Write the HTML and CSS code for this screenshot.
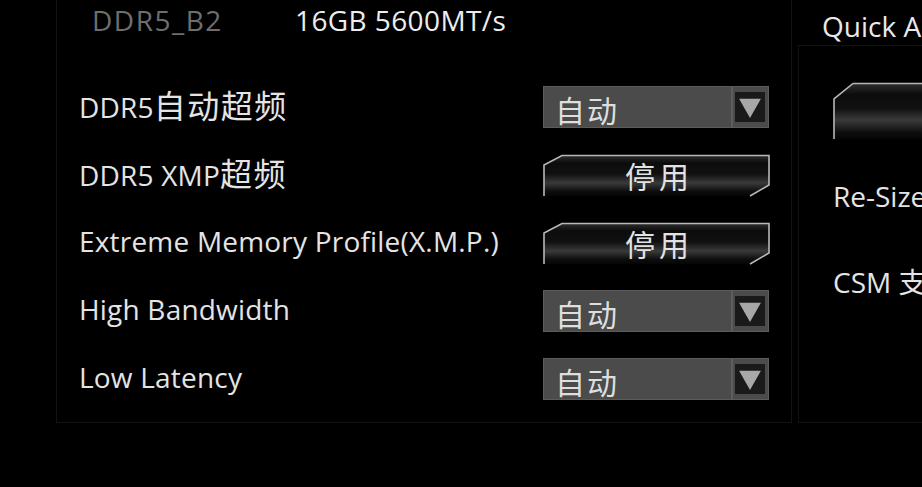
FILE: index.html
```html
<!DOCTYPE html>
<html lang="zh-CN">
<head>
<meta charset="utf-8">
<title>Memory Settings</title>
<link rel="stylesheet" href="styles.css">
</head>
<body>
<div class="screen">
  <section class="panel-left">
    <div class="header">
      <span class="slot">DDR5_B2</span>
      <span class="spec">16GB 5600MT/s</span>
    </div>
    <div class="rows">
      <div class="row">
        <span class="label">DDR5<span class="cjk">自动超频</span></span>
        <div class="select"><span class="select-text">自动</span><span class="arrow"><svg width="22" height="22" viewBox="0 0 22 22"><path d="M3 5 L19 5 L11 19 Z" fill="#a8a8a8"/></svg></span></div>
      </div>
      <div class="row">
        <span class="label">DDR5 XMP<span class="cjk">超频</span></span>
        <div class="btn">
          <svg class="btn-bg" width="228" height="43" viewBox="0 0 228 43" preserveAspectRatio="none">
            <defs>
              <linearGradient id="g1" x1="0" y1="0" x2="0" y2="1">
                <stop offset="0" stop-color="#2e2e2e"/>
                <stop offset="0.18" stop-color="#0c0c0c"/>
                <stop offset="0.45" stop-color="#101010"/>
                <stop offset="0.68" stop-color="#3a3a3a"/>
                <stop offset="0.88" stop-color="#0e0e0e"/>
                <stop offset="1" stop-color="#050505"/>
              </linearGradient>
            </defs>
            <path d="M1 42 L1 11 L19 1.5 L226 1.5 L226 31 L207 42 Z" fill="url(#g1)"/>
            <path d="M1 42 L1 11 L19 1.5 L226 1.5 L226 31 L207 42" fill="none" stroke="#b8b8b8" stroke-width="1.6"/>
          </svg>
          <span class="btn-text">停用</span>
        </div>
      </div>
      <div class="row">
        <span class="label">Extreme Memory Profile(X.M.P.)</span>
        <div class="btn">
          <svg class="btn-bg" width="228" height="43" viewBox="0 0 228 43" preserveAspectRatio="none">
            <defs>
              <linearGradient id="g2" x1="0" y1="0" x2="0" y2="1">
                <stop offset="0" stop-color="#2e2e2e"/>
                <stop offset="0.18" stop-color="#0c0c0c"/>
                <stop offset="0.45" stop-color="#101010"/>
                <stop offset="0.68" stop-color="#3a3a3a"/>
                <stop offset="0.88" stop-color="#0e0e0e"/>
                <stop offset="1" stop-color="#050505"/>
              </linearGradient>
            </defs>
            <path d="M1 42 L1 11 L19 1.5 L226 1.5 L226 31 L207 42 Z" fill="url(#g2)"/>
            <path d="M1 42 L1 11 L19 1.5 L226 1.5 L226 31 L207 42" fill="none" stroke="#b8b8b8" stroke-width="1.6"/>
          </svg>
          <span class="btn-text">停用</span>
        </div>
      </div>
      <div class="row">
        <span class="label">High Bandwidth</span>
        <div class="select"><span class="select-text">自动</span><span class="arrow"><svg width="22" height="22" viewBox="0 0 22 22"><path d="M3 5 L19 5 L11 19 Z" fill="#a8a8a8"/></svg></span></div>
      </div>
      <div class="row">
        <span class="label">Low Latency</span>
        <div class="select"><span class="select-text">自动</span><span class="arrow"><svg width="22" height="22" viewBox="0 0 22 22"><path d="M3 5 L19 5 L11 19 Z" fill="#a8a8a8"/></svg></span></div>
      </div>
    </div>
  </section>
  <section class="panel-right-col">
    <div class="right-title">Quick Access</div>
    <div class="panel-right">
      <div class="rbtn">
        <svg width="100" height="58" viewBox="0 0 100 58">
          <defs>
            <linearGradient id="g3" x1="0" y1="0" x2="0" y2="1">
              <stop offset="0" stop-color="#2e2e2e"/>
              <stop offset="0.2" stop-color="#0c0c0c"/>
              <stop offset="0.45" stop-color="#111"/>
              <stop offset="0.66" stop-color="#3a3a3a"/>
              <stop offset="0.88" stop-color="#0e0e0e"/>
              <stop offset="1" stop-color="#050505"/>
            </linearGradient>
          </defs>
          <path d="M1 57 L1 17 L20 1.5 L100 1.5 L100 57 Z" fill="url(#g3)"/>
          <path d="M1 57 L1 17 L20 1.5 L100 1.5" fill="none" stroke="#b8b8b8" stroke-width="1.6"/>
        </svg>
      </div>
      <div class="ritem">Re-Size BAR</div>
      <div class="ritem">CSM 支持</div>
    </div>
  </section>
</div>
</body>
</html>
```

FILE: styles.css
```css
html, body {
  margin: 0;
  padding: 0;
  background: #000;
  width: 922px;
  height: 487px;
  overflow: hidden;
}

.screen {
  display: flex;
  align-items: flex-start;
  width: 922px;
  overflow: hidden;
  font-family: "Open Sans", "Noto Sans CJK SC", sans-serif;
  color: #e4e4e4;
}

.cjk {
  font-family: "Noto Sans CJK SC", sans-serif;
  font-size: 32px;
  letter-spacing: 1.5px;
}

.panel-left {
  flex-shrink: 0;
  margin-left: 56px;
  width: 736px;
  height: 423px;
  box-sizing: border-box;
  border: 1px solid #121212;
  border-top: none;
  display: flex;
  flex-direction: column;
}

.header {
  height: 40px;
  display: flex;
  align-items: center;
  font-size: 28px;
  padding-left: 35px;
}

.slot {
  color: #6e6e6e;
  width: 203px;
  letter-spacing: 1.5px;
}

.spec {
  color: #ededed;
  letter-spacing: 0.4px;
}

.rows {
  margin-top: 33px;
  display: flex;
  flex-direction: column;
}

.row {
  height: 68px;
  display: flex;
  align-items: center;
  padding-left: 22px;
}

.label {
  font-size: 28px;
  letter-spacing: 0.2px;
  width: 464px;
  white-space: nowrap;
  padding-bottom: 4px;
  line-height: 40px;
}

.select {
  width: 224px;
  height: 40px;
  background: #4b4b4b;
  border: 1px solid #5c5c5c;
  display: flex;
  align-items: center;
  justify-content: space-between;
  box-sizing: content-box;
}

.select-text {
  font-family: "Noto Sans CJK SC", sans-serif;
  font-size: 30px;
  color: #dedede;
  padding-left: 11px;
  padding-top: 4px;
  letter-spacing: 2px;
}

.arrow {
  height: 100%;
  display: flex;
  align-items: center;
  border-left: 2px solid #5e5e5e;
  padding-left: 2px;
  padding-right: 3px;
}

.arrow svg {
  display: block;
  width: 30px;
  height: 30px;
  background: #1a1a1a;
}

.btn {
  position: relative;
  width: 228px;
  height: 43px;
  display: flex;
  align-items: center;
  justify-content: center;
}

.btn-bg {
  position: absolute;
  left: 0;
  top: 0;
}

.btn-text {
  position: relative;
  font-family: "Noto Sans CJK SC", sans-serif;
  font-size: 30px;
  color: #e2e2e2;
  letter-spacing: 4px;
  padding-left: 4px;
}

.panel-right-col {
  flex-shrink: 0;
  width: 124px;
  margin-left: 6px;
  display: flex;
  flex-direction: column;
  overflow: hidden;
}

.right-title {
  height: 45px;
  line-height: 52px;
  font-size: 28px;
  padding-left: 24px;
  white-space: nowrap;
  color: #e8e8e8;
}

.panel-right {
  height: 378px;
  box-sizing: border-box;
  border-top: 1px solid #121212;
  border-left: 1px solid #121212;
  border-bottom: 1px solid #121212;
  padding-left: 34px;
  padding-top: 36px;
  display: flex;
  flex-direction: column;
  white-space: nowrap;
}

.rbtn svg {
  display: block;
}

.ritem {
  font-size: 28px;
  height: 86px;
  line-height: 82px;
  color: #e4e4e4;
}

.rbtn + .ritem {
  margin-top: 15px;
}
```
